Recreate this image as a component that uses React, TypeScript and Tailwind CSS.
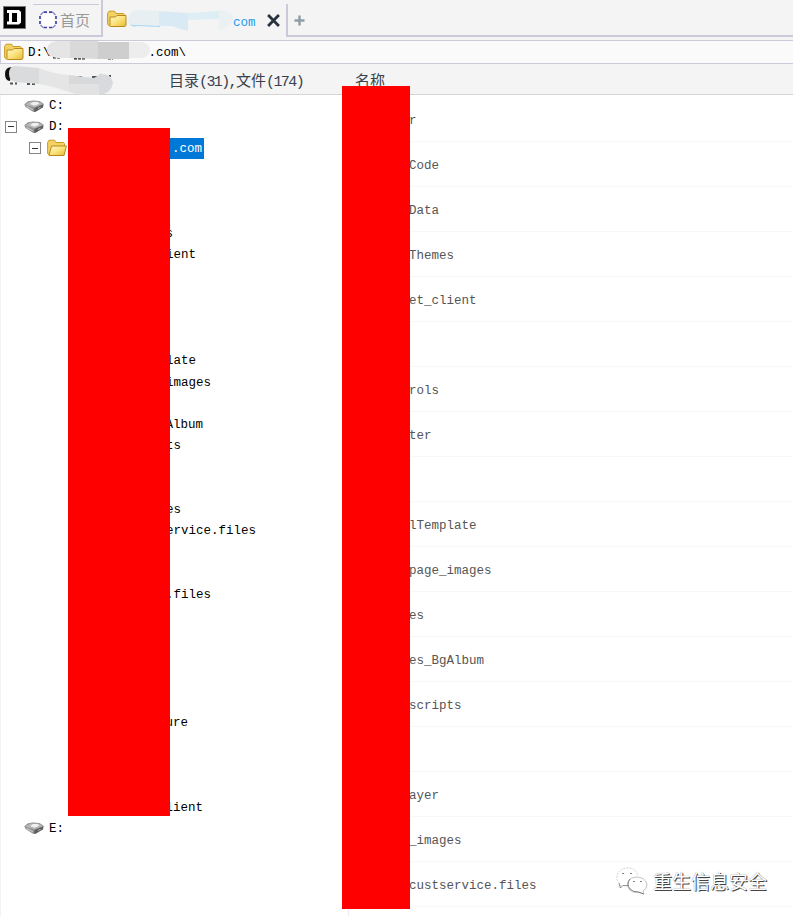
import React from "react";

const MONO =
  "font-['Liberation_Mono','Noto_Sans_CJK_SC',monospace] text-[12.5px] leading-[14px] whitespace-pre";
const CJK = "font-['Noto_Sans_CJK_SC',sans-serif]";

function Folder({ open = false }: { open?: boolean }) {
  return (
    <svg width="20" height="18" viewBox="0 0 20 18" className="block shrink-0">
      <defs>
        <linearGradient id="folderFill" x1="0" y1="0" x2="1" y2="1">
          <stop offset="0" stopColor="#fffbd0" />
          <stop offset="0.5" stopColor="#fbe27c" />
          <stop offset="1" stopColor="#e5b92f" />
        </linearGradient>
      </defs>
      <path
        d="M0.6 3.5 L2 1.2 H7.5 L9 3.5 H16.5 L17.5 4.5 V14.5 L16 16 H2.5 L0.6 14.5 Z"
        fill="#f3d263"
        stroke="#c99a25"
      />
      {open ? (
        <path d="M4.5 7 H19.4 L17 16.5 H2 Z" fill="url(#folderFill)" stroke="#b78a20" />
      ) : (
        <path
          d="M3 7 H8.5 L10 5.5 H19 V15 L18 16.5 H3.6 L3 15.5 Z"
          fill="url(#folderFill)"
          stroke="#b78a20"
        />
      )}
    </svg>
  );
}

function Drive() {
  return (
    <svg width="20" height="12" viewBox="0 0 20 12" className="block shrink-0">
      <path d="M0.3 4.2 L4 1.2 L9 0.4 L15.5 1 L19.7 3.8 L19 7.3 L11.5 11.7 H9 L1.5 7 Z" fill="#909090" />
      <path d="M1 4.4 L6 1.4 H14.5 L19 4 L10.5 7.6 Z" fill="#b5b5b5" />
      <path d="M6 4 L9 2 H13.5 L15.4 3.8 L10.5 5.8 Z" fill="#f0f0f0" />
      <path d="M10.5 8 L19.3 4.4 L19 7.3 L11.5 11.7 H10 Z" fill="#5e5e5e" />
      <path d="M2.5 6.4 L9 9.8" stroke="#c4c4c4" strokeWidth="1.2" />
      <path d="M14 8.5 L16.5 7.3" stroke="#b9b9b9" />
    </svg>
  );
}

function Minus() {
  return (
    <span className="flex h-[12px] w-[12px] shrink-0 items-center justify-center border border-[#858585] bg-white">
      <span className="h-px w-[6px] bg-[#333]" />
    </span>
  );
}

const tree: Record<number, [string, string]> = {
  6: ["s", "w-[173px]"],
  7: ["ient", "w-[196px]"],
  12: ["late", "w-[196px]"],
  13: ["images", "w-[211px]"],
  15: ["Album", "w-[203px]"],
  16: ["ts", "w-[181px]"],
  19: ["es", "w-[181px]"],
  20: ["ervice.files", "w-[256px]"],
  23: [".files", "w-[211px]"],
  29: ["ure", "w-[188px]"],
  33: ["lient", "w-[203px]"],
};

const files = [
  "r", "Code", "Data", "Themes", "et_client", "", "rols", "ter", "",
  "lTemplate", "page_images", "es", "es_BgAlbum", "scripts", "", "ayer",
  "_images", "custservice.files",
];

function TreeRow({ i }: { i: number }) {
  const drive = i === 0 ? "C:" : i === 1 ? "D:" : i === 34 ? "E:" : null;
  if (drive) {
    return (
      <div className="flex h-[21.26px] shrink-0 items-center pl-[5px]">
        <span className="w-[19px]">{i === 1 && <Minus />}</span>
        <Drive />
        <span className={`${MONO} ml-[5px] pt-px`}>{drive}</span>
      </div>
    );
  }
  if (i === 2) {
    return (
      <div className="flex h-[21.26px] shrink-0 items-center pl-[29px]">
        <Minus />
        <span className="ml-[6px]">
          <Folder open />
        </span>
        <span className={`${MONO} ml-[2px] flex h-[21px] w-[135px] items-center justify-end bg-[#0078d7] pt-[2px] pr-[2px] text-white`}>
          .com
        </span>
      </div>
    );
  }
  const item = tree[i];
  return (
    <div className="flex h-[21.26px] shrink-0 items-center pt-[1.4px]">
      {item && <span className={`${MONO} ${item[1]} text-right`}>{item[0]}</span>}
    </div>
  );
}

function TabBar() {
  return (
    <div className="flex h-[40px] bg-[#f4f4f4]">
      <div className="h-[37px] w-[32px] border-b-2 border-[#cbc9da] pt-[6px] pl-[3px]">
        <svg width="23" height="23" viewBox="0 0 23 23" className="block">
          <rect width="23" height="23" fill="#777" />
          <rect x="1" y="1" width="21" height="21" fill="#000" />
          <path d="M4 4 H16 L18 6 V16.5 L16 18.5 H4 V15.5 H6 V7 H4 Z" fill="#fff" />
          <rect x="9" y="7" width="5" height="9" fill="#000" />
        </svg>
      </div>
      <div className="h-[37px] w-[71px] border-r-2 border-b-2 border-[#cbc9da] pt-[4px]">
        <div className="ml-px w-[66px] border-t border-[#cbc9da]" />
        <div className="flex items-center pt-[3px] pl-[7px]">
          <svg width="18" height="18" viewBox="0 0 18 18" className="block shrink-0">
            <rect x="3" y="3" width="12" height="12" fill="#fff" />
            <path
              d="M4.5 1.2 H8 M10 1.2 H13.5 M4.5 16.5 H8 M10 16.5 H13.5 M1 5 V8 M1 10 V13 M17 5 V8 M17 10 V13"
              stroke="#4542a8"
              strokeWidth="1.7"
            />
            <path d="M1.5 4 L4 1.5 M14 1.5 L16.5 4 M1.5 14 L4 16.5 M14 16.5 L16.5 14" stroke="#8986c8" strokeWidth="1.4" />
          </svg>
          <span className={`${CJK} ml-[3px] text-[15px] leading-[24px] text-[#999]`}>首页</span>
        </div>
      </div>
      <div className="flex h-[37px] w-[183px] items-center pl-[4px]">
        <Folder />
        <svg width="106" height="26" viewBox="0 0 106 26" className="mt-[5px] ml-px block shrink-0">
          <path d="M2 15 Q3 20 9 18 L32 19 V17 L2 15" fill="#a5d7f7" />
          <path d="M0 12 Q1 2 11 2 L31 3 V18 L9 17 Q0 18 0 12" fill="#e8eff2" />
          <path d="M31 3 L60 5 V23 L43 18 L31 18 Z" fill="#d9eaf5" />
          <path d="M60 5 L91 3 V11 L60 12 Z" fill="#dfedf5" />
          <path d="M91 2 Q105 3 105 11 Q101 21 91 21 Z" fill="#ebf0f3" />
        </svg>
        <span className={`${MONO} mt-[8px] ml-[-1px] text-[#209df0]`}>com</span>
        <svg width="13" height="13" viewBox="0 0 12 12" className="mt-[4px] ml-[11px] block shrink-0">
          <path d="M1 1 L11 11 M11 1 L1 11" stroke="#29333e" strokeWidth="2.6" />
        </svg>
      </div>
      <div className="flex h-[37px] flex-1 flex-col">
        <div className="h-[4px]" />
        <div className="flex flex-1 items-center border-b-2 border-l-2 border-[#cbc9da] pl-[6px]">
          <svg width="11" height="11" viewBox="0 0 11 11" className="mt-[1px] block">
            <path d="M5.5 0.5 V10.5 M0.5 5.5 H10.5" stroke="#8d9da6" strokeWidth="2.4" />
          </svg>
        </div>
      </div>
    </div>
  );
}

export default function App() {
  return (
    <div className="relative flex h-[916px] w-[793px] flex-col overflow-hidden bg-white text-black">
      <TabBar />
      <div className="relative flex h-[24px] shrink-0 items-center border-y border-l border-[#cbc9da] bg-[#fafafa] pl-[3px]">
        <Folder />
        <span className={`${MONO} ml-[4px] pt-[2px]`}>{"D:\\"}</span>
        <span className={`${MONO} ml-[98px] pt-[2px]`}>{".com\\"}</span>
        <svg width="105" height="20" viewBox="0 0 105 20" className="absolute top-0 left-[45px]">
          <path d="M7 16.5 H14 M28 17.5 H40 M62 17.5 H67" stroke="#222" strokeWidth="2" strokeDasharray="3 1" />
          <path d="M1 7 Q3 0 12 0 H24 V17 H12 Q0 16 1 7" fill="#e5e5e5" />
          <path d="M24 0 H52 V18 L24 17 Z" fill="#d9d9d9" />
          <path d="M52 1 H83 V18 H52 Z" fill="#cecece" />
          <path d="M83 1 H96 Q104 3 104 9 Q103 16 95 17 H83 Z" fill="#ededed" />
        </svg>
      </div>
      <div className={`${CJK} relative flex h-[31px] shrink-0 items-center border-b border-[#d4d4d4] bg-[#f4f4f4] pl-[169px] text-[#37424c]`}>
        <span className="mt-[7px] w-[186px] font-['Liberation_Mono','Noto_Sans_CJK_SC',monospace] text-[15px] leading-[20px] tracking-[-1.6px] whitespace-pre">
          <span className="tracking-normal">目录</span>(31),<span className="tracking-normal">文件</span>(174)
        </span>
        <span className="mt-[2px] text-[15px] leading-[20px]">名称</span>
        <svg width="115" height="34" viewBox="0 0 115 34" className="absolute top-0 left-0 z-10">
          <path d="M12 3 Q5 3 5 10 Q5 17 10 17 Z" fill="#111" />
          <path d="M10 19.5 H17 M27 20 H35" stroke="#4b5559" strokeWidth="2" strokeDasharray="3 2" />
          <path d="M76 13 H83 M92 13 H97 M101 12 H111" stroke="#4b5559" strokeWidth="2" strokeDasharray="6 2" />
          <path d="M9 10 Q9 2 15 2 L39 4 V20 L16 18 Q9 17 9 10" fill="#dadbdd" />
          <path d="M39 4 Q54 10 69 11 V28 Q52 22 39 20 Z" fill="#e5e5e6" />
          <path d="M69 16 H99 V31 L80 31 L69 28 Z" fill="#e2e2e2" />
          <path d="M69 11 L94 14 L102 9 L99 20 H69 Z" fill="#d8d9da" />
          <path d="M99 10 Q112 9 113 19 Q111 30 99 31 Z" fill="#d9dadd" />
        </svg>
      </div>
      <div className="flex min-h-0 flex-1">
        <div className="flex w-[349px] shrink-0 flex-col border-r border-l border-r-[#ececec] border-l-[#f3f3f3]">
          <div className="-ml-px flex flex-col">
            {Array.from({ length: 35 }, (_, i) => (
              <TreeRow key={i} i={i} />
            ))}
          </div>
        </div>
        <div className="flex flex-1 flex-col pt-[2px]">
          {files.map((name, i) => (
            <div key={i} className="flex h-[45.03px] shrink-0 items-center border-b border-[#f8f8f8] pt-[4px] pl-[60px]">
              <span className={`${MONO} text-[#555]`}>{name}</span>
            </div>
          ))}
        </div>
      </div>
      <div className="absolute top-[128px] left-[68px] h-[688px] w-[102px] bg-[#f00]" />
      <div className="absolute top-[86px] left-[342px] z-20 h-[823px] w-[68px] bg-[#f00]" />
      <div className="absolute top-[867px] left-[616px] flex items-center">
        <svg width="32" height="28" viewBox="0 0 32 28" className="block" fill="#fff" strokeWidth="0.9">
          <path d="M12 19 Q8 19 5 18 L4 21 L3 16 Q0 13 1 9 Q3 1 12 1 Q20 1 22 9" stroke="#ccc" strokeDasharray="2 1" />
          <path d="M27 24 L28 27 L23 25 Q15 27 12 20 Q10 11 20 10 Q29 10 31 17 Q31 22 27 24Z" stroke="#bbb" />
          <path d="M14 12 Q10 17 14 22 Q17 25 22 25 L28 27" fill="none" stroke="#777" />
          <path d="M3 16 L4.5 21 L7 18.5 H12" fill="none" stroke="#888" />
          <path d="M6 7 L7 6 L8 7 M14 7 L15 6 L16 7 M17 15 L18 14 L19 15 M24 15 L25 14 L26 15" fill="none" stroke="#777" />
        </svg>
        <span className={`${CJK} ml-[5px] text-[19px] leading-[28px] text-white [text-shadow:1px_1px_0_#444,0_0_1px_#777]`}>
          重生信息安全
        </span>
      </div>
    </div>
  );
}
